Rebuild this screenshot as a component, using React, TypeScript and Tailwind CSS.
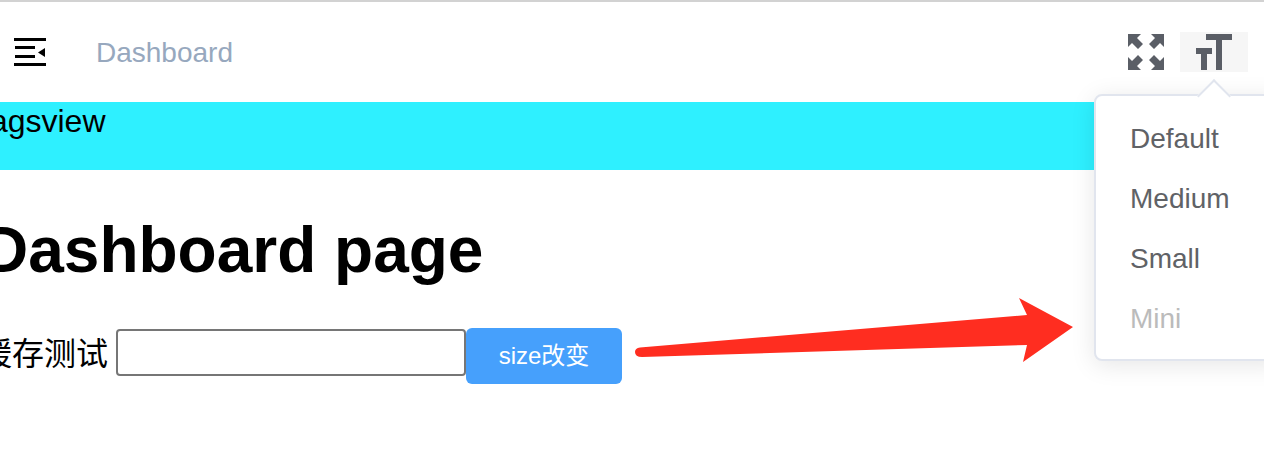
import React from "react";

const sizes = ["Default", "Medium", "Small", "Mini"];

function HamburgerIcon() {
  return (
    <svg width="32" height="28" viewBox="0 0 32 28" className="block" fill="#000">
      <rect x="0" y="0" width="32" height="3" />
      <rect x="1" y="8" width="20" height="3" />
      <rect x="1" y="17" width="20" height="3" />
      <rect x="0" y="25" width="32" height="3" />
      <path d="M24 14.5 L31 10 L31 19 Z" />
    </svg>
  );
}

function FullscreenIcon() {
  return (
    <svg width="36" height="36" viewBox="0 0 36 36" className="block" fill="#5a5e66">
      <path d="M0 0 H13 L9 4 L15 10 L10 15 L4 9 L0 13 Z" />
      <path d="M36 0 H23 L27 4 L21 10 L26 15 L32 9 L36 13 Z" />
      <path d="M0 36 H13 L9 32 L15 26 L10 21 L4 27 L0 23 Z" />
      <path d="M36 36 H23 L27 32 L21 26 L26 21 L32 27 L36 23 Z" />
    </svg>
  );
}

function SizeIcon() {
  return (
    <svg width="36" height="36" viewBox="0 0 36 36" className="block" fill="#5a5e66">
      <path d="M10 0 H36 V6 H26 V36 H20 V6 H10 Z" />
      <path d="M0 14 H16 V20 H11 V36 H5 V20 H0 Z" />
    </svg>
  );
}

export default function App() {
  return (
    <div className="relative w-[1264px] h-[464px] overflow-hidden bg-white text-black font-['Liberation_Sans','Noto_Sans_CJK_SC',sans-serif]">
      <div className="h-[2px] bg-[#d2d2d2]" />

      <div className="h-[100px] flex items-start justify-between bg-white">
        <div className="flex items-start pt-[36px]">
          <div className="ml-[14px]">
            <HamburgerIcon />
          </div>
          <span className="ml-[50px] -mt-[1px] text-[28px] leading-[32px] text-[#97a8be]">Dashboard</span>
        </div>
        <div className="flex items-start pt-[30px] pr-[16px]">
          <div className="mt-[2px]">
            <FullscreenIcon />
          </div>
          <div className="ml-[16px] w-[68px] h-[40px] bg-[#f6f6f6] flex justify-center items-end pb-[2px]">
            <SizeIcon />
          </div>
        </div>
      </div>

      <div className="h-[68px] bg-[#2ef0ff] text-[32px] leading-[38px] -ml-[19px]">tagsview</div>

      <div>
        <h1 className="-ml-[18px] mt-[43px] text-[64px] leading-[74px] font-bold">Dashboard page</h1>
        <div className="-ml-[20px] mt-[41px] flex items-start">
          <span className="mt-[6px] text-[32px] leading-[40px]">缓存测试</span>
          <input className="ml-[8px] mt-[1px] w-[350px] h-[47px] border-2 border-[#767676] rounded-[4px] bg-white" />
          <button className="w-[156px] h-[56px] rounded-[6px] bg-[#46a0fc] text-white text-[24px] leading-[56px]">
            size改变
          </button>
        </div>
      </div>

      {/* dropdown menu */}
      <div className="absolute left-[1094px] top-[94px] w-[190px] h-[267px] bg-white border-2 border-[#e1e5ee] rounded-[8px] shadow-[0_4px_24px_rgba(0,0,0,0.1)] py-[13px]">
        <div className="absolute left-[106px] -top-[12px] w-[24px] h-[24px] rotate-45 bg-white border-l-2 border-t-2 border-[#e1e5ee]" />
        {sizes.map((s) => (
          <div
            key={s}
            className={`relative h-[60px] pl-[34px] text-[28px] leading-[60px] ${
              s === "Mini" ? "text-[#bbbbbb]" : "text-[#606266]"
            }`}
          >
            {s}
          </div>
        ))}
      </div>

      {/* annotation arrow */}
      <svg className="absolute left-0 top-0" width="1264" height="464" fill="none">
        <path
          d="M640 347.5 L1027 315 L1019 298 L1073 327 L1023 362 L1027 345 L642 357 Q635 357 635 352 Q635 348 640 347.5 Z"
          fill="#ff2d20"
        />
      </svg>
    </div>
  );
}
